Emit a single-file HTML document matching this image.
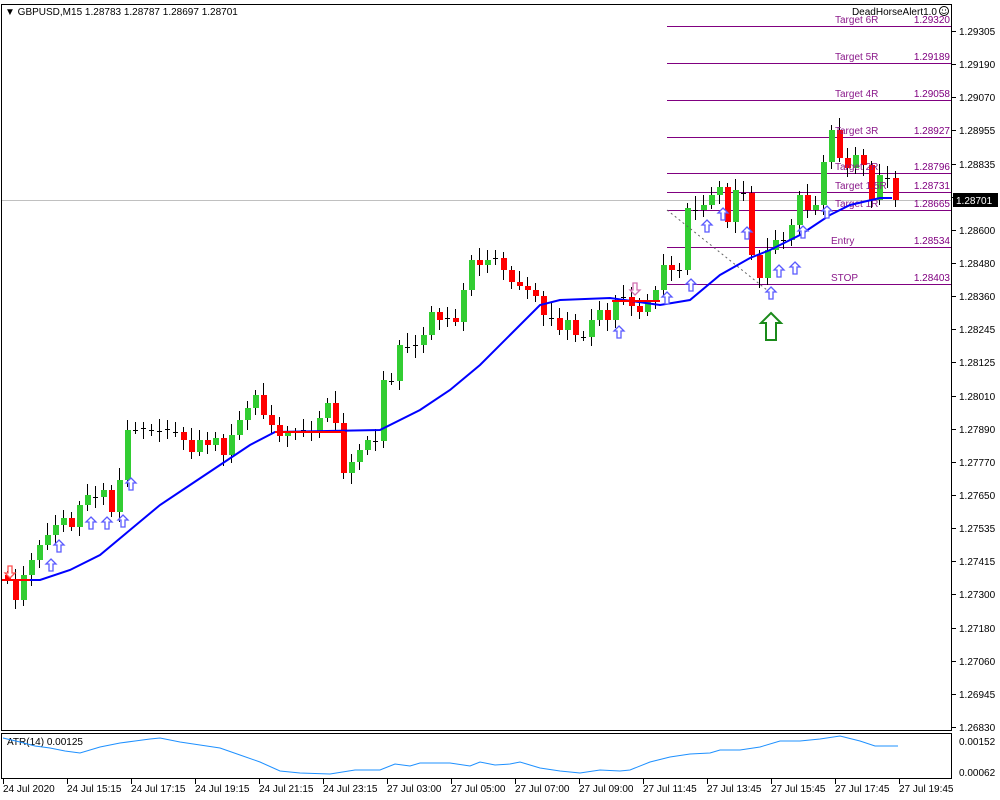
<!DOCTYPE html>
<html><head><meta charset="utf-8"><style>
html,body{margin:0;padding:0;background:#fff;width:1000px;height:800px;overflow:hidden;font-family:"Liberation Sans",Tahoma,sans-serif;}
svg{display:block}
</style></head><body>
<svg id="s" width="1000" height="800" xmlns="http://www.w3.org/2000/svg" font-family="Liberation Sans, sans-serif" font-size="10">
<rect x="0" y="0" width="1000" height="800" fill="#fff"/>
<rect x="1.5" y="4.5" width="950" height="726" fill="none" stroke="#000"/>
<rect x="1.5" y="733.5" width="950" height="45" fill="none" stroke="#000"/>
<line x1="2" y1="200.5" x2="951" y2="200.5" stroke="#c0c0c0"/>
<g id="lv" stroke="#800080" stroke-width="1"></g>
<g id="cd"></g>
<g id="ax" font-size="10" fill="#000"></g>
<text x="5" y="15" font-size="10">▼ GBPUSD,M15  1.28783 1.28787 1.28697 1.28701</text>
<text x="937" y="15" font-size="10" text-anchor="end">DeadHorseAlert1.0</text>
<circle cx="944" cy="11" r="4.5" fill="none" stroke="#000"/>
<circle cx="942.5" cy="10" r="0.6"/><circle cx="945.5" cy="10" r="0.6"/>
<path d="M941.5 12.5 Q944 14.5 946.5 12.5" fill="none" stroke="#000" stroke-width="0.8"/>
<text x="7" y="745" font-size="10">ATR(14) 0.00125</text>
<rect x="953" y="193" width="45" height="14" fill="#000"/>
<text x="956" y="204" fill="#fff" font-size="10">1.28701</text>
<line x1="667" y1="210" x2="767" y2="290" stroke="#606060" stroke-dasharray="2,3"/>
<polygon points="771,313 781,323 776,323 776,340 766,340 766,323 761,323" fill="none" stroke="#1a8a1a" stroke-width="2"/>
</svg>
<script>
var s=document.getElementById('s'),NS='http://www.w3.org/2000/svg';
function el(p,t,a,txt){var e=document.createElementNS(NS,t);for(var k in a)e.setAttribute(k,a[k]);if(txt!=null)e.textContent=txt;p.appendChild(e);return e;}
var lv=document.getElementById('lv');
var L=[[26,'Target 6R','1.29320'],[63,'Target 5R','1.29189'],[100,'Target 4R','1.29058'],[137,'Target 3R','1.28927'],[173,'Target 2R','1.28796'],[192,'Target 1.5R','1.28731'],[210,'Target 1R','1.28665'],[247,'Entry','1.28534'],[284,'STOP','1.28403']];
L.forEach(function(l){el(lv,'line',{x1:667,x2:951,y1:l[0]+.5,y2:l[0]+.5});
el(s,'text',{x:l[1]=='Entry'||l[1]=='STOP'?831:835,y:l[0]-3,fill:'#8b1a8b','font-size':10},l[1]);
el(s,'text',{x:950,y:l[0]-3,fill:'#800080','font-size':10,'text-anchor':'end'},l[2]);});
var ax=document.getElementById('ax');
var P=['1.29305','1.29190','1.29070','1.28955','1.28835','','1.28600','1.28480','1.28360','1.28245','1.28125','1.28010','1.27890','1.27770','1.27650','1.27535','1.27415','1.27300','1.27180','1.27060','1.26945','1.26830'];
P.forEach(function(p,i){var y=Math.round(31+i*33.14);el(ax,'line',{x1:952,x2:956,y1:y+.5,y2:y+.5,stroke:'#000'});if(p)el(ax,'text',{x:959,y:y+4},p);});
el(ax,'text',{x:959,y:745},'0.00152');el(ax,'text',{x:959,y:776},'0.00062');
var T=['24 Jul 2020','24 Jul 15:15','24 Jul 17:15','24 Jul 19:15','24 Jul 21:15','24 Jul 23:15','27 Jul 03:00','27 Jul 05:00','27 Jul 07:00','27 Jul 09:00','27 Jul 11:45','27 Jul 13:45','27 Jul 15:45','27 Jul 17:45','27 Jul 19:45'];
T.forEach(function(t,i){var x=3+i*64;el(ax,'line',{x1:x+.5,x2:x+.5,y1:779,y2:784,stroke:'#000'});el(ax,'text',{x:x,y:792},t);});
var C=[580,600,575,560,545,535,525,518,527,505,495,497,490,512,480,430,430,428,430,431,429,432,440,452,440,445,438,455,435,420,408,395,415,425,436,432,432,430,431,418,403,423,473,462,450,440,441,380,381,345,347,345,335,312,320,318,322,290,260,265,260,258,270,282,286,290,296,315,318,330,320,335,337,320,310,320,300,297,306,312,300,290,265,270,270,208,210,205,195,187,222,190,193,255,278,250,240,240,225,195,210,205,162,130,158,168,155,165,200,175,178,200];
var cd=document.getElementById('cd'),prev=575;
C.forEach(function(c,i){var x=7+i*8,o=prev,hi=Math.min(o,c)-4-(i*7%9),lo=Math.max(o,c)+4+(i*5%8);
el(cd,'line',{x1:x+.5,x2:x+.5,y1:hi,y2:lo,stroke:'#000'});
if(Math.abs(o-c)<4){el(cd,'line',{x1:x-2,x2:x+3,y1:c+.5,y2:c+.5,stroke:'#000'});}
else el(cd,'rect',{x:x-2,y:Math.min(o,c),width:6,height:Math.abs(o-c),fill:c<o?'#32cd32':'#ff0000'});
prev=c;});
el(s,'polyline',{points:'2,580 30,580 40,580 70,570 100,555 130,530 160,505 190,485 220,465 250,445 275,432 380,430 420,410 450,390 480,365 510,335 540,305 560,300 610,298 660,305 690,300 720,275 750,258 770,250 800,235 830,215 850,205 880,198 892,198',fill:'none',stroke:'#0000ff','stroke-width':2});
[[2,30,580],[275,345,432],[612,660,301]].forEach(function(r){el(s,'line',{x1:r[0],x2:r[1],y1:r[2],y2:r[2],stroke:'#ff0000','stroke-width':2});});
function up(x,y,c){var p=[[x,y-6],[x+5,y-1],[x+2,y-1],[x+2,y+6],[x-2,y+6],[x-2,y-1],[x-5,y-1]];el(s,'polygon',{points:p.map(function(q){return q.join(',')}).join(' '),fill:'#fff',stroke:c,'stroke-width':1.3});}
function dn(x,y,c){var p=[[x,y+6],[x+5,y+1],[x+2,y+1],[x+2,y-6],[x-2,y-6],[x-2,y+1],[x-5,y+1]];el(s,'polygon',{points:p.map(function(q){return q.join(',')}).join(' '),fill:'#fff',stroke:c,'stroke-width':1.3});}
var A=[[51,565],[59,546],[91,523],[107,523],[123,521],[131,484],[619,332],[667,298],[691,285],[707,226],[723,214],[747,233],[771,293],[779,271],[795,268],[803,232],[827,212]];
A.forEach(function(a){up(a[0],a[1],'#5a5aff');});
dn(10,572,'#ff5050');dn(635,289,'#d070b0');
var atr=[[3,738],[20,742],[35,746],[50,748],[65,751],[80,753],[100,747],[120,743],[135,741],[150,739],[160,738],[180,742],[200,745],[220,748],[240,755],[260,762],[280,771],[300,773],[330,774],[355,770],[380,770],[395,764],[410,766],[420,763],[450,763],[470,766],[480,762],[495,765],[510,764],[520,762],[540,768],[560,771],[580,773],[600,770],[620,771],[630,770],[650,762],[670,757],[690,754],[710,753],[720,750],[740,750],[760,747],[780,741],[800,741],[820,739],[840,736],[860,741],[875,746],[898,746]];
el(s,'polyline',{points:atr.map(function(p){return p.join(',')}).join(' '),fill:'none',stroke:'#1e90ff'});
</script>
</body></html>
